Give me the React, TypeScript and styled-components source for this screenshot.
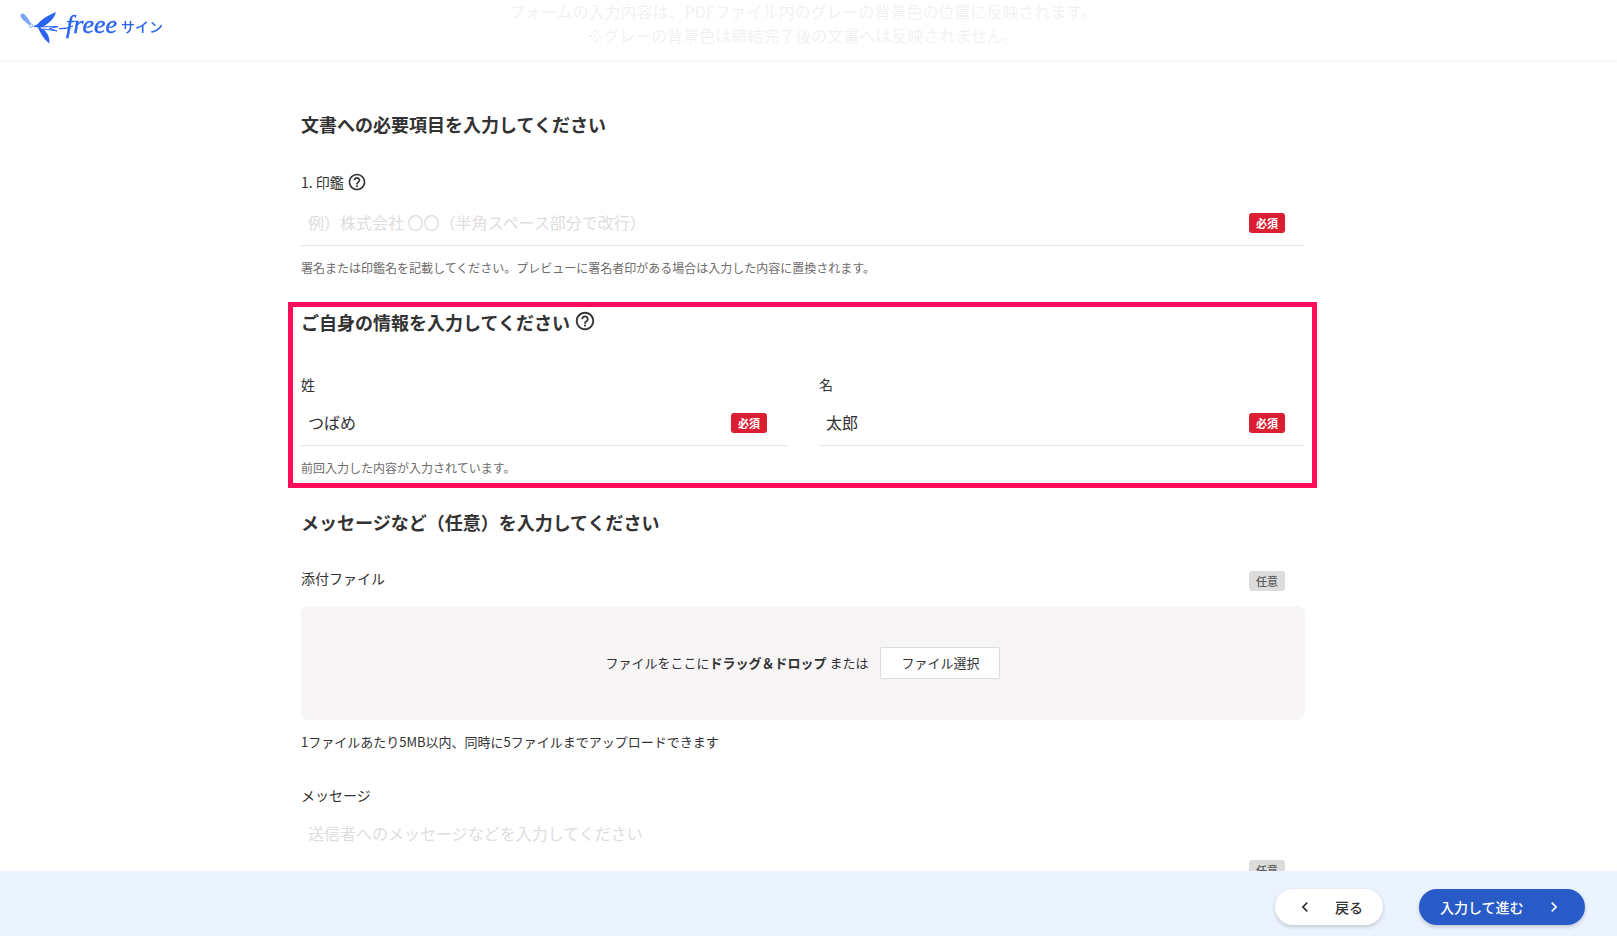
import React, { useId, useState } from "react";
import styled, { createGlobalStyle } from "styled-components";
import { MdHelpOutline, MdChevronLeft, MdChevronRight } from "react-icons/md";

const colors = {
  text: "#323232",
  sub: "#6e6b6b",
  placeholder: "#e0dddd",
  line: "#e6e6e6",
  primary: "#285ac8",
  brand: "#2864f0",
  required: "#dc1e32",
  optional: "#dcdcdc",
  highlight: "#ff0d5b",
  dropzone: "#f7f5f6",
  footer: "#ebf3ff",
};

const GlobalStyle = createGlobalStyle`
  *, *::before, *::after { box-sizing: border-box; }
  body {
    margin: 0;
    background: #fff;
    color: ${colors.text};
    font-family: "Noto Sans CJK JP", "Noto Sans", sans-serif;
    font-size: 14px;
    line-height: 20px;
    overflow: hidden;
  }
  button, input, textarea { font: inherit; color: inherit; }
`;

const Page = styled.div`
  display: flex;
  flex-direction: column;
  height: 100vh;
`;

const Header = styled.header`
  position: fixed;
  inset: 0 0 auto 0;
  z-index: 2;
  display: flex;
  align-items: center;
  height: 60px;
  padding: 0 20px;
  background: rgba(255, 255, 255, 0.93);
  box-shadow: 0 1px 3px rgba(0, 0, 0, 0.06);
`;

const LogoLink = styled.a`
  display: flex;
  color: ${colors.brand};
`;

const Scroller = styled.div`
  flex: 1;
  min-height: 0;
  overflow: hidden;
  padding-right: 11px;
`;

const Notice = styled.p`
  margin: -1px 0 0;
  font-size: 16px;
  line-height: 24px;
  text-align: center;
`;

const Form = styled.form`
  max-width: 1004px;
  margin: 0 auto;
  padding-top: 62px;
`;

const Section = styled.section<{ $highlighted?: boolean }>`
  ${({ $highlighted }) =>
    $highlighted &&
    `
    margin: 24px -12px 19px -13px;
    padding: 0 7px 5px 8px;
    border: 5px solid ${colors.highlight};
  `}
`;

const HelpButton = styled.button`
  display: flex;
  padding: 0;
  border: 0;
  background: none;
`;

const Heading = styled.h2<{ $gap: number }>`
  display: flex;
  align-items: center;
  gap: 4px;
  margin: 0 0 ${({ $gap }) => $gap}px;
  font-size: 18px;
  line-height: 30px;
  font-weight: 700;

  ${HelpButton} {
    padding-bottom: 2px;
  }
`;

const Field = styled.div`
  display: flex;
  flex-direction: column;
`;

const LabelRow = styled.div<{ $withHelp?: boolean }>`
  display: flex;
  align-items: center;
  gap: 3px;
  height: ${({ $withHelp }) => ($withHelp ? 24 : 20)}px;
`;

const InputRow = styled.div<{ $multiline?: boolean }>`
  display: flex;
  align-items: ${({ $multiline }) => ($multiline ? "flex-end" : "center")};
  height: ${({ $multiline }) => ($multiline ? 90 : 52)}px;
  padding: ${({ $multiline }) => ($multiline ? "4px 20px 14px 7px" : "7px 20px 0 7px")};
  border-bottom: 1px solid ${colors.line};
`;

const TextInput = styled.input`
  flex: 1;
  min-width: 0;
  height: 32px;
  padding: 0 0 2px;
  border: 0;
  outline: 0;
  background: none;
  font-size: 16px;
  &::placeholder { color: ${colors.placeholder}; opacity: 1; }
`;

const TextArea = styled.textarea`
  flex: 1;
  align-self: stretch;
  min-width: 0;
  padding: 12px 0 0;
  border: 0;
  outline: 0;
  resize: none;
  background: none;
  font-size: 16px;
  line-height: 24px;
  &::placeholder { color: ${colors.placeholder}; opacity: 1; }
`;

const Badge = styled.span<{ $required?: boolean }>`
  flex: none;
  width: 36px;
  height: 20px;
  border-radius: 3px;
  background: ${({ $required }) => ($required ? colors.required : colors.optional)};
  color: ${({ $required }) => ($required ? "#fff" : "#595959")};
  font-size: 11px;
  line-height: 20px;
  font-weight: ${({ $required }) => ($required ? 700 : 500)};
  text-align: center;
`;

const Hint = styled.p`
  margin: 12px 0 0;
  color: ${colors.sub};
  font-size: 12px;
  line-height: 20px;
`;

const NameGrid = styled.div`
  display: grid;
  grid-template-columns: 1fr 1fr;
  gap: 32px;
`;

const AttachmentHead = styled.div`
  display: flex;
  justify-content: space-between;
  align-items: flex-end;
  height: 38px;
  padding: 0 20px 15px 0;

  label {
    align-self: flex-start;
  }
`;

const Dropzone = styled.div`
  display: flex;
  align-items: center;
  justify-content: center;
  gap: 12px;
  height: 114px;
  border-radius: 8px;
  background: ${colors.dropzone};
  font-size: 13px;
`;

const FileButton = styled.button`
  width: 120px;
  height: 32px;
  padding: 0;
  border: 1px solid #dcdcdc;
  border-radius: 2px;
  background: #fff;
  font-size: 13px;
`;

const UploadNote = styled.p`
  margin: 12px 0 33px;
  font-size: 13px;
  line-height: 20px;
`;

const Footer = styled.footer`
  display: flex;
  align-items: center;
  justify-content: flex-end;
  gap: 36px;
  height: 65px;
  padding: 7px 32px 0;
  background: ${colors.footer};
`;

const PillButton = styled.button<{ $primary?: boolean }>`
  display: flex;
  align-items: center;
  justify-content: space-between;
  width: ${({ $primary }) => ($primary ? 166 : 108)}px;
  height: 36px;
  padding: 0 ${({ $primary }) => ($primary ? 21 : 20)}px;
  border: 0;
  border-radius: 18px;
  background: ${({ $primary }) => ($primary ? colors.primary : "#fff")};
  color: ${({ $primary }) => ($primary ? "#fff" : colors.text)};
  box-shadow: 0 2px 4px rgba(0, 0, 0, 0.18);
  font-weight: 500;
`;

function Logo() {
  return (
    <svg width="144" height="40" viewBox="20 10 144 40" role="img" aria-label="freee サイン">
      <path d="M20.600 15.600c0-2 2.400-2.800 4-1 2 2.200 4.200 5.200 6.400 8.800l-1.400 1.800c-3.200-2.400-5.800-4.400-7.600-6.400-1-1-1.400-2-1.400-3.200z" fill="#78a5fa" />
      <circle cx="31" cy="25.600" r="1.700" fill="none" stroke="#78a5fa" />
      <path d="M33 26.200c2.400-.8 4-1.400 5.600-3.200C42 18.600 49 15.400 55.800 12c-.6 4.600-4.600 9.400-10.800 13.600l-5 2.400c-2-.4-4.600-.8-7-1.800z" fill="currentColor" />
      <path d="M38 27.600c2 .2 4 .8 5.600 2 4 3.200 6.200 8 5.800 14-4.600-3.400-8.600-9.600-11.400-16z" fill="currentColor" />
      <path d="M42 26.800l16-.2-9 2 8 2.200-14-1.800" fill="none" stroke="currentColor" strokeLinejoin="round" />
      <path d="M59 28.600c5 .2 9.600-.6 14-2.600" fill="none" stroke="currentColor" strokeWidth="1.300" />
      <text x="66" y="33" fontFamily="Liberation Serif, serif" fontStyle="italic" fontSize="26" fill="currentColor" stroke="currentColor" strokeWidth="0.400">freee</text>
      <text x="121" y="32" fontFamily="Noto Sans CJK JP, sans-serif" fontWeight="500" fontSize="14" fill="currentColor">サイン</text>
    </svg>
  );
}

function NameField({ label, initial }: { label: string; initial: string }) {
  const id = useId();
  const [value, setValue] = useState(initial);
  return (
    <Field>
      <LabelRow>
        <label htmlFor={id}>{label}</label>
      </LabelRow>
      <InputRow>
        <TextInput id={id} value={value} onChange={(e) => setValue(e.target.value)} required />
        <Badge $required>必須</Badge>
      </InputRow>
    </Field>
  );
}

export default function App() {
  return (
    <Page>
      <GlobalStyle />
      <Header>
        <LogoLink href="#">
          <Logo />
        </LogoLink>
      </Header>
      <Scroller>
        <Notice>
          フォームの入力内容は、PDFファイル内のグレーの背景色の位置に反映されます。
          <br />
          ※グレーの背景色は締結完了後の文書へは反映されません。
        </Notice>
        <Form id="sign-form" onSubmit={(e) => e.preventDefault()}>
          <Section>
            <Heading $gap={31}>文書への必要項目を入力してください</Heading>
            <Field>
              <LabelRow $withHelp>
                <label htmlFor="seal">1. 印鑑</label>
                <HelpButton type="button" aria-label="印鑑のヘルプ">
                  <MdHelpOutline size={20} />
                </HelpButton>
              </LabelRow>
              <InputRow>
                <TextInput id="seal" placeholder="例）株式会社 〇〇（半角スペース部分で改行）" required />
                <Badge $required>必須</Badge>
              </InputRow>
              <Hint>署名または印鑑名を記載してください。プレビューに署名者印がある場合は入力した内容に置換されます。</Hint>
            </Field>
          </Section>

          <Section $highlighted>
            <Heading $gap={37}>
              ご自身の情報を入力してください
              <HelpButton type="button" aria-label="ご自身の情報のヘルプ">
                <MdHelpOutline size={22} />
              </HelpButton>
            </Heading>
            <NameGrid>
              <NameField label="姓" initial="つばめ" />
              <NameField label="名" initial="太郎" />
            </NameGrid>
            <Hint>前回入力した内容が入力されています。</Hint>
          </Section>

          <Section>
            <Heading $gap={31}>メッセージなど（任意）を入力してください</Heading>
            <AttachmentHead>
              <label htmlFor="attachment">添付ファイル</label>
              <Badge>任意</Badge>
            </AttachmentHead>
            <Dropzone>
              <span>
                ファイルをここに<b>ドラッグ＆ドロップ</b> または
              </span>
              <FileButton id="attachment" type="button">ファイル選択</FileButton>
            </Dropzone>
            <UploadNote>1ファイルあたり5MB以内、同時に5ファイルまでアップロードできます</UploadNote>
            <Field>
              <LabelRow>
                <label htmlFor="message">メッセージ</label>
              </LabelRow>
              <InputRow $multiline>
                <TextArea id="message" placeholder="送信者へのメッセージなどを入力してください" />
                <Badge>任意</Badge>
              </InputRow>
            </Field>
          </Section>
        </Form>
      </Scroller>
      <Footer>
        <PillButton type="button">
          <MdChevronLeft size={20} />
          戻る
        </PillButton>
        <PillButton type="submit" form="sign-form" $primary>
          入力して進む
          <MdChevronRight size={20} />
        </PillButton>
      </Footer>
    </Page>
  );
}
